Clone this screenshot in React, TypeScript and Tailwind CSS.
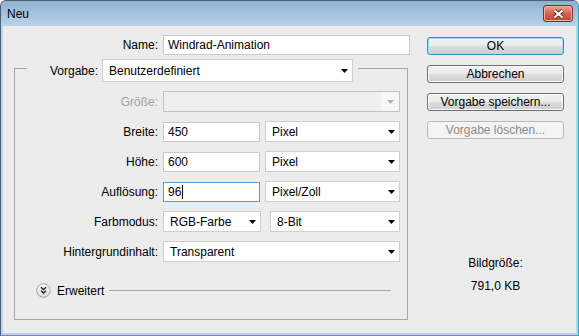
import React from "react";

const Arrow = ({ disabled }: { disabled?: boolean }) => (
  <svg width="7" height="4" viewBox="0 0 7 4" className="shrink-0">
    <path d="M0 0h7L3.5 4z" fill={disabled ? "#b0b0b0" : "#000"} />
  </svg>
);

function Select({ text, className }: { text: string; className: string }) {
  return (
    <div className={"flex items-center border border-[#cfcfcf] bg-white pl-[6px] pr-[4px] " + className}>
      <span className="flex-1 leading-[14px]">{text}</span>
      <Arrow />
    </div>
  );
}

function TextBox({ text, className, focused }: { text: string; className: string; focused?: boolean }) {
  return (
    <div
      className={
        "flex h-[20px] items-center bg-white pl-[4px] border " +
        (focused ? "border-[#5aa2da] " : "border-[#c9c9c9] ") +
        className
      }
    >
      <span className="leading-[14px]">{text}</span>
      {focused && <span className="ml-[1px] h-[14px] w-px bg-black" />}
    </div>
  );
}

function Btn({ label, def, disabled }: { label: string; def?: boolean; disabled?: boolean }) {
  if (disabled)
    return (
      <div className="flex h-[18px] items-center justify-center rounded-[3px] border border-[#b5b9bc] bg-[#f4f4f4] text-[#8a8a8a] leading-[14px]">
        {label}
      </div>
    );
  return (
    <div
      className={
        "flex h-[18px] items-center justify-center rounded-[3px] border bg-[linear-gradient(#f2f2f2,#ebebeb_50%,#dddddd_50%,#cfcfcf)] leading-[14px] " +
        (def
          ? "border-[#2a95c9] shadow-[inset_0_0_0_1px_#9fdcf5]"
          : "border-[#707070] shadow-[inset_0_0_0_1px_#fbfbfb]")
      }
    >
      {label}
    </div>
  );
}

function Row({ label, children, disabled }: { label: string; children: React.ReactNode; disabled?: boolean }) {
  return (
    <div className="flex h-[21px] items-center">
      <div className={"w-[143px] text-right leading-[14px] " + (disabled ? "text-[#a3a3a3]" : "")}>{label}</div>
      <div className="ml-[5px] flex items-center">{children}</div>
    </div>
  );
}

export default function App() {
  return (
    <div className="flex h-[336px] w-[579px] flex-col overflow-hidden rounded-t-[6px] border border-[#4d5f73] border-r-[#19acd6] border-b-[#19acd6] bg-[#b9d3ea] font-['Liberation_Sans',Arial,sans-serif] text-[12px] text-black">
      {/* title bar */}
      <div className="flex h-[25px] shrink-0 items-center bg-gradient-to-b from-[#8fb2d2] to-[#b8d3ea] pl-[6px] pr-[5px]">
        <span className="leading-[14px]">Neu</span>
        <div className="ml-auto flex h-[17px] w-[30px] items-center justify-center rounded-[3px] border border-[#7b2e24] bg-gradient-to-b from-[#e8a597] via-[#d4624f] to-[#c9432e] shadow-[inset_0_0_0_1px_#eeb0a4]">
          <svg width="13" height="10" viewBox="0 0 13 10">
            <path d="M2.5 1.5l8 7M10.5 1.5l-8 7" stroke="#5a2a24" strokeWidth="4" />
            <path d="M2.5 1.5l8 7M10.5 1.5l-8 7" stroke="#ffffff" strokeWidth="2.2" />
          </svg>
        </div>
      </div>

      {/* client */}
      <div className="mx-[2px] flex h-[307px] shrink-0 bg-[#ececec]">
        {/* left column */}
        <div className="flex flex-col pl-[11px] pt-[9px]">
          <div className="flex h-[20px] items-center">
            <div className="w-[144px] text-right leading-[14px]">Name:</div>
            <TextBox text="Windrad-Animation" className="ml-[5px] w-[247px]" />
          </div>

          <div className="mt-[13px] flex h-[252px] w-[394px] flex-col border-b border-l border-r border-[#a6a6a6]">
            {/* legend */}
            <div className="-mt-[9px] flex h-[23px] items-start">
              <div className="mt-[9px] w-[12px] border-t border-[#a6a6a6]" />
              <div className="w-[71px] self-center text-right leading-[14px]">Vorgabe:</div>
              <Select text="Benutzerdefiniert" className="ml-[4px] h-[23px] w-[251px]" />
              <div className="ml-[5px] mt-[9px] flex-1 border-t border-[#a6a6a6]" />
            </div>

            <div className="mt-[9px] flex flex-col gap-[9px]">
              <Row label="Größe:" disabled>
                <div className="flex h-[21px] w-[237px] items-center border border-[#c4c4c4] bg-[#efefef]">
                  <div className="flex-1" />
                  <div className="flex h-full w-[18px] items-center justify-center bg-[#f7f7f7]">
                    <Arrow disabled />
                  </div>
                </div>
              </Row>
              <Row label="Breite:">
                <TextBox text="450" className="w-[97px]" />
                <Select text="Pixel" className="ml-[5px] h-[21px] w-[135px]" />
              </Row>
              <Row label="Höhe:">
                <TextBox text="600" className="w-[97px]" />
                <Select text="Pixel" className="ml-[5px] h-[21px] w-[135px]" />
              </Row>
              <Row label="Auflösung:">
                <TextBox text="96" focused className="w-[97px]" />
                <Select text="Pixel/Zoll" className="ml-[5px] h-[21px] w-[135px]" />
              </Row>
              <Row label="Farbmodus:">
                <Select text="RGB-Farbe" className="h-[21px] w-[98px]" />
                <Select text="8-Bit" className="ml-[9px] h-[21px] w-[130px]" />
              </Row>
              <Row label="Hintergrundinhalt:">
                <Select text="Transparent" className="h-[21px] w-[237px]" />
              </Row>
            </div>

            {/* Erweitert */}
            <div className="ml-[21px] mr-[16px] mt-[21px] flex h-[15px] items-center">
              <svg width="15" height="15" viewBox="0 0 15 15" className="shrink-0">
                <defs>
                  <linearGradient id="eg" x1="0" y1="0" x2="0" y2="1">
                    <stop offset="0" stopColor="#ffffff" />
                    <stop offset="1" stopColor="#d6d6d6" />
                  </linearGradient>
                </defs>
                <circle cx="7.5" cy="7.5" r="6.8" fill="url(#eg)" stroke="#a3a3a3" />
                <path d="M5 4.3l2.5 2.4 2.5-2.4M5 7.6l2.5 2.4 2.5-2.4" stroke="#111" fill="none" strokeWidth="1.3" />
              </svg>
              <span className="ml-[6px] leading-[14px]">Erweitert</span>
              <div className="ml-[5px] h-px flex-1 bg-[#a6a6a6]" />
            </div>
          </div>
        </div>

        {/* right column */}
        <div className="ml-[17px] flex w-[137px] flex-col pt-[11px]">
          <div className="flex flex-col gap-[10px]">
            <Btn label="OK" def />
            <Btn label="Abbrechen" />
            <Btn label="Vorgabe speichern..." />
            <Btn label="Vorgabe löschen..." disabled />
          </div>
          <div className="mt-[117px] text-center leading-[14px]">Bildgröße:</div>
          <div className="mt-[9px] text-center leading-[14px]">791,0 KB</div>
        </div>
      </div>
    </div>
  );
}
